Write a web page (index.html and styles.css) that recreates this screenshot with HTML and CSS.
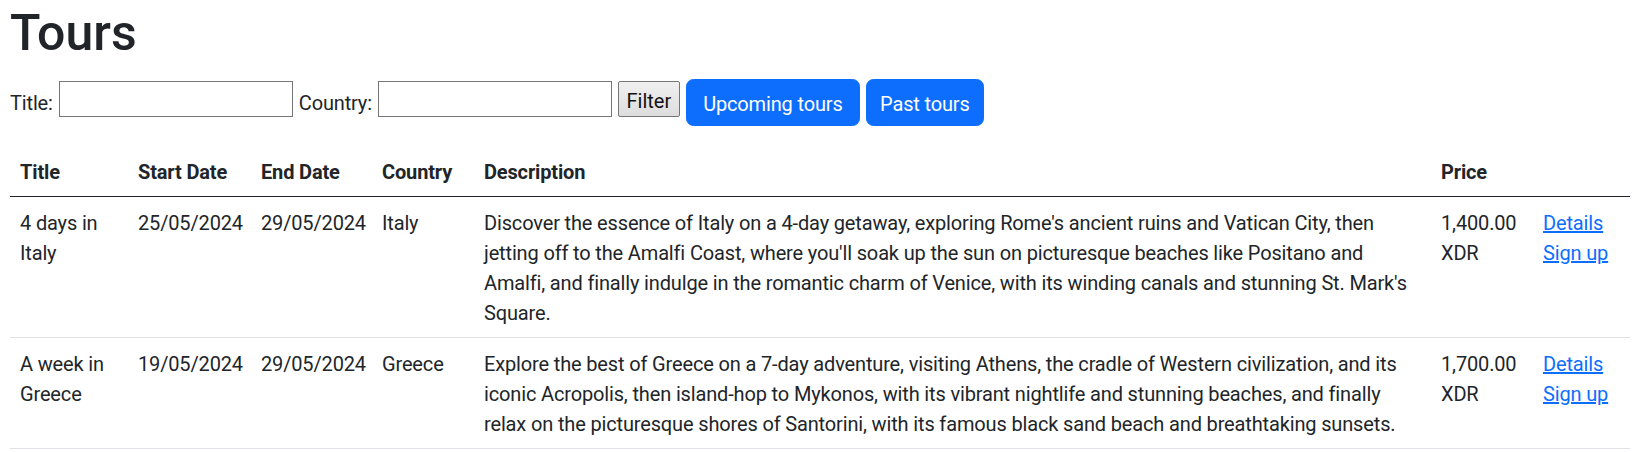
FILE: index.html
```html
<!DOCTYPE html>
<html lang="en">
<head>
<meta charset="utf-8">
<title>Tours</title>
<link rel="stylesheet" href="styles.css">
</head>
<body>
<div class="page">
  <h1 class="page-title">Tours</h1>
  <form class="toolbar">
    <label class="field-label" for="title">Title:</label>
    <input class="field-input" id="title" type="text">
    <label class="field-label" for="country">Country:</label>
    <input class="field-input" id="country" type="text">
    <button class="btn-filter" type="button">Filter</button>
    <a class="btn-primary btn-upcoming" href="#">Upcoming tours</a>
    <a class="btn-primary btn-past" href="#">Past tours</a>
  </form>
  <table class="tours">
    <colgroup>
      <col class="c-title">
      <col class="c-start">
      <col class="c-end">
      <col class="c-country">
      <col class="c-desc">
      <col class="c-price">
      <col class="c-actions">
    </colgroup>
    <thead>
      <tr>
        <th>Title</th>
        <th>Start Date</th>
        <th>End Date</th>
        <th>Country</th>
        <th>Description</th>
        <th>Price</th>
        <th></th>
      </tr>
    </thead>
    <tbody>
      <tr>
        <td>4 days in Italy</td>
        <td>25/05/2024</td>
        <td>29/05/2024</td>
        <td>Italy</td>
        <td>Discover the essence of Italy on a 4-day getaway, exploring Rome's ancient ruins and Vatican City, then jetting off to the Amalfi Coast, where you'll soak up the sun on picturesque beaches like Positano and Amalfi, and finally indulge in the romantic charm of Venice, with its winding canals and stunning St. Mark's Square.</td>
        <td>1,400.00 XDR</td>
        <td><a class="row-link" href="#">Details</a><a class="row-link" href="#">Sign up</a></td>
      </tr>
      <tr>
        <td>A week in Greece</td>
        <td>19/05/2024</td>
        <td>29/05/2024</td>
        <td>Greece</td>
        <td>Explore the best of Greece on a 7-day adventure, visiting Athens, the cradle of Western civilization, and its iconic Acropolis, then island-hop to Mykonos, with its vibrant nightlife and stunning beaches, and finally relax on the picturesque shores of Santorini, with its famous black sand beach and breathtaking sunsets.</td>
        <td>1,700.00 XDR</td>
        <td><a class="row-link" href="#">Details</a><a class="row-link" href="#">Sign up</a></td>
      </tr>
    </tbody>
  </table>
</div>
</body>
</html>
```

FILE: styles.css
```css
* { box-sizing: border-box; }

html, body {
  margin: 0;
  padding: 0;
  background: #fff;
}

body {
  font-family: Roboto, "Liberation Sans", sans-serif;
  font-size: 20px;
  line-height: 30px;
  letter-spacing: -0.15px;
  color: #212529;
}

.page {
  padding: 0 12px 0 10px;
}

.page-title {
  margin: 0 0 7px;
  padding-top: 3px;
  font-size: 50px;
  line-height: 60px;
  font-weight: 500;
  letter-spacing: 0;
}

.toolbar {
  display: flex;
  align-items: flex-start;
  gap: 6px;
  height: 56px;
  margin: 0 0 20px;
}

.field-label {
  margin-top: 18px;
  line-height: 30px;
}

.field-input {
  margin-top: 11px;
  width: 234px;
  height: 36px;
  padding: 2px 3px;
  border: 1px solid #767676;
  border-radius: 0;
  font: inherit;
  background: #fff;
}

.btn-filter {
  margin-top: 11px;
  height: 36px;
  width: 62px;
  padding: 3px 0 0;
  border: 1px solid #767676;
  border-radius: 2px;
  background: linear-gradient(#f0f0f0, #dddddd);
  font: inherit;
  color: #111;
}

.btn-primary {
  margin-top: 9px;
  display: inline-block;
  padding: 8.5px 0 6.5px;
  border: 1px solid #0d6efd;
  border-radius: 7.5px;
  background: #0d6efd;
  color: #fff;
  text-align: center;
  text-decoration: none;
  line-height: 30px;
}

.btn-upcoming { width: 174px; }
.btn-past { width: 118px; }

.tours {
  width: 100%;
  table-layout: fixed;
  border-collapse: collapse;
}

.c-title { width: 118px; }
.c-start { width: 123px; }
.c-end { width: 121px; }
.c-country { width: 102px; }
.c-desc { width: 957px; }
.c-price { width: 102px; }
.c-actions { width: 97px; }

.tours th,
.tours td {
  padding: 11px 10px 9px;
  text-align: left;
  vertical-align: top;
}

.tours th {
  font-weight: 700;
  vertical-align: bottom;
  border-bottom: 1px solid #212529;
}

.tours td {
  border-bottom: 1px solid #dee2e6;
}

.row-link {
  display: block;
  color: #0d6efd;
  text-decoration: underline;
}
```
